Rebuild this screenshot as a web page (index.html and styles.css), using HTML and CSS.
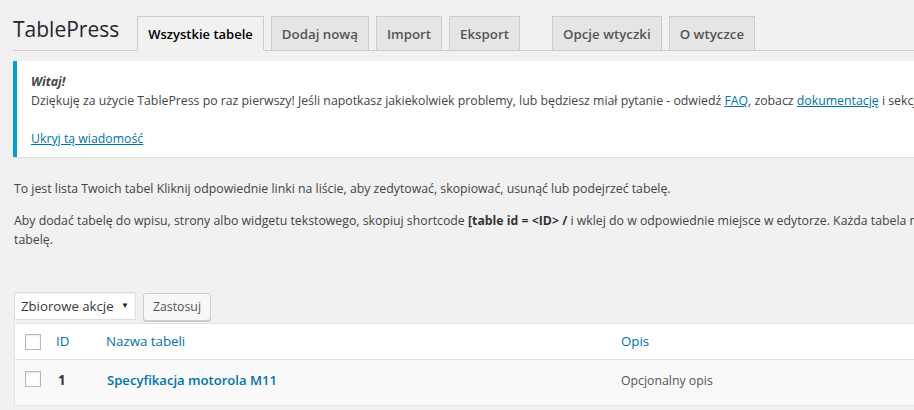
FILE: index.html
```html
<!DOCTYPE html>
<html lang="pl">
<head>
<meta charset="utf-8">
<title>TablePress</title>
<link rel="stylesheet" href="styles.css">
</head>
<body>
<div class="wrap">
  <div class="nav">
    <h1 class="title">TablePress</h1>
    <a class="tab active">Wszystkie tabele</a>
    <a class="tab">Dodaj nową</a>
    <a class="tab">Import</a>
    <a class="tab">Eksport</a>
    <span class="spacer"></span>
    <a class="tab">Opcje wtyczki</a>
    <a class="tab">O wtyczce</a>
  </div>

  <div class="notice">
    <p class="notice-p"><strong><em>Witaj!</em></strong><br>Dziękuję za użycie TablePress po raz pierwszy! Jeśli napotkasz jakiekolwiek problemy, lub będziesz miał pytanie - odwiedź <a class="link">FAQ</a>, zobacz <a class="link">dokumentację</a> i sekcję wsparcia na stronie wtyczki.</p>
    <p class="notice-p notice-hide"><a class="link">Ukryj tą wiadomość</a></p>
  </div>

  <p class="intro">To jest lista Twoich tabel Kliknij odpowiednie linki na liście, aby zedytować, skopiować, usunąć lub podejrzeć tabelę.</p>
  <p class="intro intro2">Aby dodać tabelę do wpisu, strony albo widgetu tekstowego, skopiuj shortcode <strong class="code">[table id = &lt;ID&gt; /</strong> i wklej do w odpowiednie miejsce w edytorze. Każda tabela ma unikalne ID, które musi zostać użyte, aby wyświetlić tę<br>tabelę.</p>

  <div class="tablenav">
    <div class="select"><span>Zbiorowe akcje</span><span class="arrow">▼</span></div>
    <div class="button">Zastosuj</div>
  </div>

  <div class="table">
    <div class="row head">
      <div class="cell cb"><span class="checkbox"></span></div>
      <div class="cell id"><a class="hlink">ID</a></div>
      <div class="cell name"><a class="hlink">Nazwa tabeli</a></div>
      <div class="cell desc"><a class="hlink">Opis</a></div>
    </div>
    <div class="row alt">
      <div class="cell cb"><span class="checkbox"></span></div>
      <div class="cell id body-id">1</div>
      <div class="cell name"><a class="row-title">Specyfikacja motorola M11</a></div>
      <div class="cell desc body-desc">Opcjonalny opis</div>
    </div>
  </div>
</div>
</body>
</html>
```
FILE: styles.css
```css
html, body {
  margin: 0;
  padding: 0;
  background: #f1f1f1;
  overflow: hidden;
}
body {
  font-family: "Open Sans", "Noto Sans", sans-serif;
  font-size: 12.3px;
  line-height: 19px;
  color: #444;
}
.wrap {
  width: 1300px;
  padding-left: 13px;
}
.nav {
  display: flex;
  align-items: flex-end;
  height: 51px;
  border-bottom: 1px solid #ccc;
  box-sizing: border-box;
}
.title {
  margin: 0 18px 0 0;
  font-size: 21px;
  font-weight: 400;
  line-height: 29px;
  color: #23282d;
  padding-bottom: 6px;
}
.tab {
  display: block;
  box-sizing: border-box;
  height: 35px;
  margin-left: 7px;
  margin-bottom: -1px;
  padding: 5px 10px;
  border: 1px solid #ccc;
  background: #e5e5e5;
  color: #555;
  font-size: 13.3px;
  font-weight: 600;
  line-height: 24px;
  white-space: nowrap;
}
.title + .tab { margin-left: 0; }
.tab.active {
  background: #f1f1f1;
  color: #000;
  font-size: 13px;
  border-bottom-color: #f1f1f1;
}
.spacer { width: 25px; }
.notice {
  margin-top: 10px;
  background: #fff;
  border-left: 4px solid #00a0d2;
  box-shadow: 0 1px 1px rgba(0,0,0,0.08);
  padding: 1px 12px;
  height: 96px;
  box-sizing: border-box;
}
.notice-p {
  margin: 8px 0;
  padding: 2px;
  white-space: nowrap;
}
.notice-hide { margin-top: 15px; }
.link { color: #0073aa; text-decoration: underline; }
.intro {
  margin: 13px 0 0 1px;
  white-space: nowrap;
}
.intro:first-of-type { margin-top: 22px; }
.code { font-weight: 700; color: #333; }
.tablenav {
  display: flex;
  gap: 7px;
  margin-top: 43px;
  height: 31px;
  margin-left: 1px;
}
.select {
  box-sizing: border-box;
  width: 122px;
  height: 28px;
  background: #fff;
  border: 1px solid #ddd;
  box-shadow: inset 0 1px 2px rgba(0,0,0,0.07);
  color: #32373c;
  font-size: 13.2px;
  line-height: 26px;
  padding-left: 6px;
  display: flex;
  justify-content: space-between;
  white-space: nowrap;
}
.arrow {
  font-size: 8px;
  padding-right: 6px;
  color: #222;
  line-height: 24px;
}
.button {
  box-sizing: border-box;
  height: 28px;
  margin-top: 1px;
  padding: 0 9px;
  background: #f7f7f7;
  border: 1px solid #ccc;
  border-radius: 3px;
  box-shadow: 0 1px 0 #ccc;
  color: #555;
  line-height: 26px;
}
.table {
  margin-left: 1px;
  background: #fff;
  border: 1px solid #e5e5e5;
  box-shadow: 0 1px 1px rgba(0,0,0,0.04);
}
.row {
  display: grid;
  grid-template-columns: 33px 50px 515px 1fr;
  align-items: center;
}
.head {
  height: 35px;
  border-bottom: 1px solid #e1e1e1;
  font-size: 13.3px;
}
.alt {
  background: #f9f9f9;
  height: 45px;
  align-items: start;
  padding-top: 11px;
  box-sizing: border-box;
}
.cell { padding-left: 8px; }
.cb { padding-left: 10px; display: flex; }
.checkbox {
  display: block;
  width: 16px;
  height: 16px;
  box-sizing: border-box;
  border: 1px solid #b4b9be;
  background: #fff;
  box-shadow: inset 0 1px 2px rgba(0,0,0,0.1);
}
.hlink { color: #0073aa; }
.body-id {
  padding-left: 10px;
  font-weight: 700;
  color: #32373c;
  font-size: 13.3px;
}
.row-title {
  padding-left: 1px;
  font-weight: 600;
  font-size: 13.1px;
  color: #0073aa;
}
.body-desc { color: #555; }
```
